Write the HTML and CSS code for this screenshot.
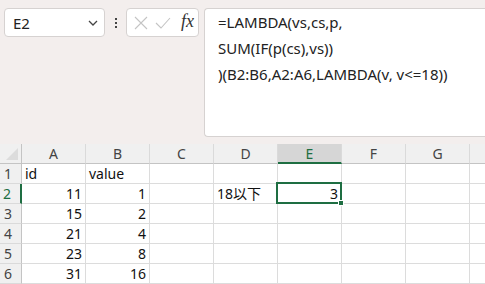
FILE: index.html
```html
<!DOCTYPE html>
<html lang="ja">
<head>
<meta charset="utf-8">
<link rel="stylesheet" href="styles.css">
</head>
<body>
<div class="top">
  <div class="namebox">
    <span class="ref">E2</span>
    <svg class="chev" width="10" height="6" viewBox="0 0 10 6"><path d="M1 1 L5 5 L9 1" fill="none" stroke="#444" stroke-width="1.3"/></svg>
  </div>
  <div class="dots"><i></i><i></i><i></i></div>
  <div class="fxbox">
    <svg class="ico" width="14" height="14" viewBox="0 0 14 14"><path d="M1 1 L13 13 M13 1 L1 13" stroke="#c4c4c4" stroke-width="1.1" fill="none"/></svg>
    <svg class="ico" width="16" height="12" viewBox="0 0 16 12"><path d="M1 6 L6 11 L15 1" stroke="#c4c4c4" stroke-width="1.1" fill="none"/></svg>
    <span class="fx">fx</span>
  </div>
  <div class="formula">
    <div>=LAMBDA(vs,cs,p,</div>
    <div>SUM(IF(p(cs),vs))</div>
    <div>)(B2:B6,A2:A6,LAMBDA(v, v&lt;=18))</div>
  </div>
</div>
<div class="sheet">
  <div class="grid">
    <div class="hd corner"><span class="tri"></span></div>
    <div class="hd">A</div><div class="hd">B</div><div class="hd">C</div><div class="hd">D</div><div class="hd sel">E</div><div class="hd">F</div><div class="hd">G</div><div class="hd"></div>

    <div class="rh">1</div>
    <div class="c">id</div><div class="c">value</div><div class="c"></div><div class="c"></div><div class="c"></div><div class="c"></div><div class="c"></div><div class="c"></div>

    <div class="rh rsel">2</div>
    <div class="c n">11</div><div class="c n">1</div><div class="c"></div><div class="c jp">18以下</div><div class="c n active">3<span class="frame"><span class="handle"></span></span></div><div class="c"></div><div class="c"></div><div class="c"></div>

    <div class="rh">3</div>
    <div class="c n">15</div><div class="c n">2</div><div class="c"></div><div class="c"></div><div class="c"></div><div class="c"></div><div class="c"></div><div class="c"></div>

    <div class="rh">4</div>
    <div class="c n">21</div><div class="c n">4</div><div class="c"></div><div class="c"></div><div class="c"></div><div class="c"></div><div class="c"></div><div class="c"></div>

    <div class="rh">5</div>
    <div class="c n">23</div><div class="c n">8</div><div class="c"></div><div class="c"></div><div class="c"></div><div class="c"></div><div class="c"></div><div class="c"></div>

    <div class="rh">6</div>
    <div class="c n">31</div><div class="c n">16</div><div class="c"></div><div class="c"></div><div class="c"></div><div class="c"></div><div class="c"></div><div class="c"></div>
  </div>
</div>
</body>
</html>
```
FILE: styles.css
```css
* { box-sizing: border-box; }
html, body { margin: 0; padding: 0; }
body {
  width: 485px;
  height: 284px;
  overflow: hidden;
  background: #f3eeed;
  font-family: "Noto Sans", "Noto Sans CJK JP", sans-serif;
  color: #222;
}
.top {
  display: flex;
  align-items: flex-start;
  padding: 8px 0 0 4px;
  height: 144px;
}
.namebox {
  width: 101px;
  height: 29px;
  background: #fff;
  border: 1px solid #d6d2d1;
  border-radius: 4px;
  display: flex;
  align-items: center;
  justify-content: space-between;
  padding: 0 6px 0 8px;
}
.ref { font-size: 15px; color: #222; }
.chev { margin-top: 1px; }
.dots {
  width: 21px;
  height: 29px;
  display: flex;
  flex-direction: column;
  align-items: center;
  justify-content: center;
  gap: 2px;
}
.dots i { display: block; width: 2px; height: 2px; background: #444; }
.fxbox {
  width: 73px;
  height: 29px;
  background: #fff;
  border: 1px solid #d6d2d1;
  border-radius: 4px;
  display: flex;
  align-items: center;
  padding: 0 4px 0 7px;
  gap: 7px;
}
.fx {
  font-family: "Liberation Serif", serif;
  font-style: italic;
  font-size: 18px;
  color: #333;
  margin-left: 3px;
  margin-top: -2px;
}
.formula {
  margin-left: 5px;
  flex: 1;
  height: 129px;
  background: #fff;
  border: 1px solid #d6d2d1;
  border-right: none;
  border-radius: 4px 0 0 4px;
  padding: 0 0 0 13px;
  font-size: 15px;
  line-height: 26px;
  color: #222;
  white-space: nowrap;
}
.sheet { height: 140px; overflow: hidden; }
.grid {
  display: grid;
  grid-template-columns: 22px repeat(7, 64px) 64px;
  grid-auto-rows: 20px;
  font-size: 14px;
}
.hd {
  background: #f0f0f0;
  border-right: 1px solid #dadada;
  border-bottom: 1px solid #c4c4c4;
  text-align: center;
  line-height: 19px;
  color: #444;
}
.hd.corner { position: relative; border-right: 1px solid #c4c4c4; }
.tri {
  position: absolute;
  right: 3px;
  bottom: 3px;
  width: 0; height: 0;
  border-left: 12px solid transparent;
  border-bottom: 12px solid #dcdcdc;
}
.hd.sel {
  background: #d6d6d6;
  color: #1e6e42;
  border-bottom: 2px solid #1e6e42;
  line-height: 19px;
}
.rh {
  background: #f0f0f0;
  border-right: 1px solid #c4c4c4;
  border-bottom: 1px solid #dadada;
  text-align: center;
  padding-right: 5px;
  line-height: 19px;
  color: #444;
}
.rh.rsel { color: #1e6e42; border-right: 2px solid #1e6e42; padding-right: 6px; }
.c {
  background: #fff;
  border-right: 1px solid #dcdcdc;
  border-bottom: 1px solid #dcdcdc;
  line-height: 19px;
  padding: 0 3px;
  white-space: nowrap;
  color: #111;
}
.c.n { text-align: right; }
.c.active { position: relative; }
.frame {
  position: absolute;
  left: -2px; top: -2px;
  width: 66px; height: 22px;
  border: 2px solid #1e6e42;
}
.handle {
  position: absolute;
  right: -4px; bottom: -4px;
  width: 6px; height: 6px;
  background: #1e6e42;
  border: 1px solid #fff;
}
```
